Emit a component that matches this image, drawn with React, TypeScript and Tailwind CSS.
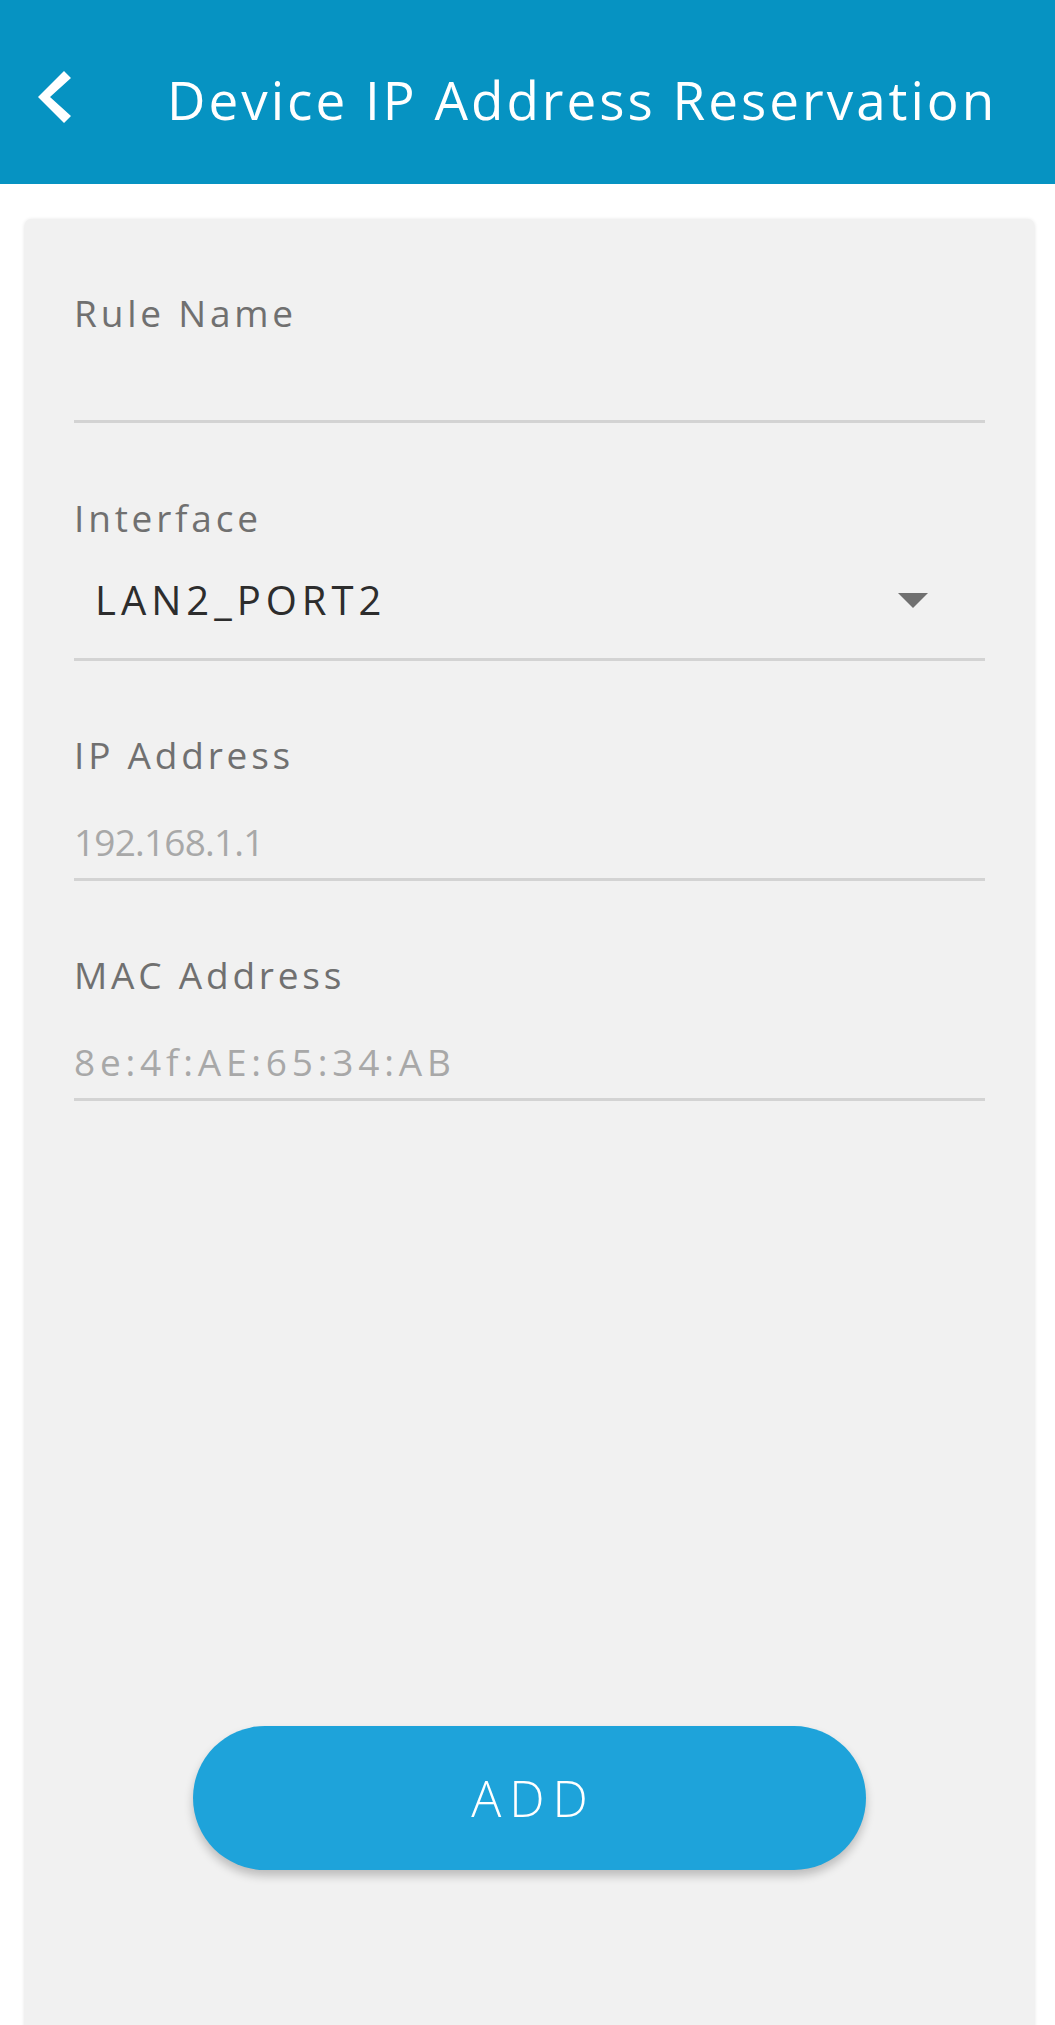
const font = { fontFamily: '"Open Sans", "Liberation Sans", sans-serif' };

function Field({
  label,
  gapTop,
  children,
  valueHeight,
}: {
  label: string;
  gapTop: string;
  children?: React.ReactNode;
  valueHeight: string;
}) {
  return (
    <div className={gapTop}>
      <div className="h-[38px] text-[37px] leading-none tracking-[3.8px] text-[#707070]">{label}</div>
      <div className={`${valueHeight} border-b-[3px] border-[#d3d3d3]`}>{children}</div>
    </div>
  );
}

export default function App() {
  return (
    <div className="min-h-[2025px] overflow-hidden bg-white" style={font}>
      <header className="flex h-[184px] items-start bg-[#0693c2] text-white">
        <svg className="ml-[38px] mt-[71px] h-[52px] w-[33px]" viewBox="38 71 33 52">
          <polygon points="64,71 71,78 50,97 71,116 64,123 38,97" fill="#ffffff" />
        </svg>
        <h1 className="ml-[96px] mt-[73px] whitespace-nowrap text-[53px] font-medium leading-none tracking-[3px]">
          Device IP Address Reservation
        </h1>
      </header>

      <div className="ml-[25px] mr-[21px] mt-[35px] rounded-[6px] bg-[#f1f1f1] px-[49px] pb-[300px] pt-[75px] shadow-[0_1px_4px_rgba(0,0,0,0.14)]">
        <Field label="Rule Name" gapTop="" valueHeight="h-[91px]" />

        <Field label="Interface" gapTop="mt-[76px]" valueHeight="h-[124px]">
          <div className="flex items-center pl-[21px] pr-[57px] pt-[43px]">
            <span className="flex-1 text-[40px] leading-none tracking-[5px] text-[#2d2d2d]">LAN2_PORT2</span>
            <svg width="30" height="15" viewBox="0 0 30 15">
              <polygon points="0,0 30,0 15,15" fill="#707070" />
            </svg>
          </div>
        </Field>

        <Field label="IP Address" gapTop="mt-[75px]" valueHeight="h-[107px]">
          <div className="pt-[49px] text-[37px] leading-none tracking-[-0.8px] text-[#a8a8a8]">192.168.1.1</div>
        </Field>

        <Field label="MAC Address" gapTop="mt-[75px]" valueHeight="h-[107px]">
          <div className="pt-[49px] text-[37px] leading-none tracking-[4.8px] text-[#a8a8a8]">8e:4f:AE:65:34:AB</div>
        </Field>

        <div className="mt-[625px] flex justify-center">
          <button className="h-[144px] w-[673px] rounded-full bg-[#1ea3da] pl-[8px] text-[50px] font-light tracking-[8px] text-white shadow-[0_6px_10px_rgba(0,0,0,0.22)]">
            ADD
          </button>
        </div>
      </div>
    </div>
  );
}
